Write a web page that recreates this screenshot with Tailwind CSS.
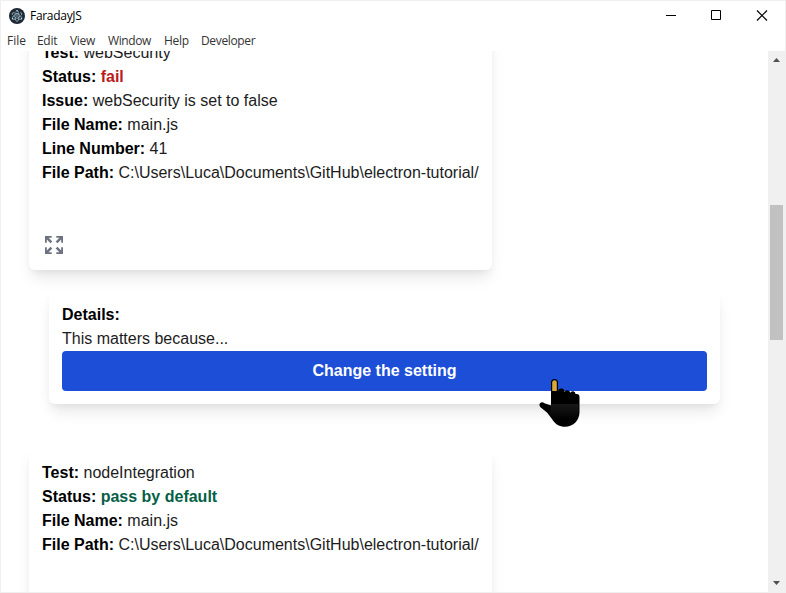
<!DOCTYPE html>
<html lang="en">
<head>
<meta charset="utf-8">
<title>FaradayJS</title>
<script src="https://cdn.jsdelivr.net/npm/@tailwindcss/browser@4"></script>
</head>
<body class="h-[593px] w-[786px] overflow-hidden bg-white">
<div class="relative flex h-[593px] w-[786px] flex-col overflow-hidden border border-[#efefef] bg-white font-['Liberation_Sans',Arial,sans-serif] text-[#1c1c1c]">
  <header class="shrink-0 font-['Open_Sans','Noto_Sans',sans-serif] text-[12px]">
    <div class="flex h-[29px] items-center pl-[8px]">
      <svg class="h-4 w-4" viewBox="0 0 16 16"><circle cx="8" cy="8" r="8" fill="#1f2833"/><g fill="none" stroke="#9fc3d2" stroke-width=".8" stroke-dasharray="4 1.200"><ellipse cx="8" cy="8" rx="5.4" ry="2.1" transform="rotate(30 8 8)"/><ellipse cx="8" cy="8" rx="5.4" ry="2.1" transform="rotate(90 8 8)"/><ellipse cx="8" cy="8" rx="5.4" ry="2.1" transform="rotate(150 8 8)"/></g><g fill="#c4dbe4"><circle cx="8" cy="8" r=".7"/><circle cx="8" cy="2.800" r=".7"/><circle cx="3.500" cy="10.800" r=".7"/><circle cx="12.500" cy="10.800" r=".7"/></g></svg>
      <span class="ml-[5px] tracking-[-0.3px] text-black">FaradayJS</span>
      <svg class="ml-auto mr-[17px] h-[11px] w-[102px]" viewBox="0 0 102 11" fill="none" stroke="#000"><path d="M0 5.5h10M45.500.5h9v9h-9z"/><path d="M91 .5l10 10M101 .5l-10 10" stroke-width="1.200"/></svg>
    </div>
    <nav class="flex h-[21px] items-center gap-[12px] pl-[6px] text-[#333]">
      <span class="w-[18px] whitespace-nowrap">File</span><span class="w-[21px] whitespace-nowrap tracking-[-0.3px]">Edit</span><span class="w-[26px] whitespace-nowrap tracking-[-0.3px]">View</span><span class="w-[44px] whitespace-nowrap tracking-[-0.4px]">Window</span><span class="w-[25px] whitespace-nowrap tracking-[-0.3px]">Help</span><span class="whitespace-nowrap tracking-[-0.35px]">Developer</span>
    </nav>
  </header>
  <div class="flex min-h-0 flex-1">
    <main class="flex min-w-0 flex-1 flex-col items-start overflow-hidden pl-[28px] text-[16px] leading-6">
      <section class="-mt-[23px] h-[242px] w-[463px] shrink-0 rounded-md bg-white px-[13px] pt-[13px] shadow-[0_10px_15px_-3px_rgba(0,0,0,0.1),0_4px_6px_-2px_rgba(0,0,0,0.05)]">
        <p><b class="text-black">Test:</b> webSecurity</p>
        <p><b class="text-black">Status: <span class="text-[#b91c1c]">fail</span></b></p>
        <p><b class="text-black">Issue:</b> webSecurity is set to false</p>
        <p><b class="text-black">File Name:</b> main.js</p>
        <p><b class="text-black">Line Number:</b> 41</p>
        <p class="whitespace-nowrap"><b class="text-black">File Path:</b> C:\Users\Luca\Documents\GitHub\electron-tutorial/</p>
        <svg class="ml-[3px] mt-[51px] h-[18px] w-[18px]" viewBox="0 0 18 18" fill="#6b7280"><path id="arrow" d="M0 0h6.700v1.800H3.600L7.300 5.500 5.500 7.300 1.800 3.600v3.100H0z"/><use href="#arrow" transform="matrix(-1 0 0 1 18 0)"/><use href="#arrow" transform="matrix(1 0 0 -1 0 18)"/><use href="#arrow" transform="matrix(-1 0 0 -1 18 18)"/></svg>
      </section>
      <section class="ml-[20px] mt-[20px] h-[114px] w-[671px] shrink-0 rounded-md bg-white px-[13px] pt-[13px] shadow-[0_10px_15px_-3px_rgba(0,0,0,0.1),0_4px_6px_-2px_rgba(0,0,0,0.05)]">
        <p><b class="text-black">Details:</b></p>
        <p>This matters because...</p>
        <button class="block h-10 w-[645px] rounded bg-[#1d4ed8] font-bold text-white">Change the setting</button>
      </section>
      <section class="mt-[44px] h-[242px] w-[463px] shrink-0 rounded-md bg-white px-[13px] pt-[13px] shadow-[0_10px_15px_-3px_rgba(0,0,0,0.1),0_4px_6px_-2px_rgba(0,0,0,0.05)]">
        <p><b class="text-black">Test:</b> nodeIntegration</p>
        <p><b class="text-black">Status: <span class="text-[#065f46]">pass by default</span></b></p>
        <p><b class="text-black">File Name:</b> main.js</p>
        <p class="whitespace-nowrap"><b class="text-black">File Path:</b> C:\Users\Luca\Documents\GitHub\electron-tutorial/</p>
      </section>
    </main>
    <aside class="flex w-[17px] shrink-0 flex-col items-center bg-[#f0f0f0]">
      <svg class="mt-[7px] h-1 w-[7px]" viewBox="0 0 7 4"><path d="M3.500 0L7 4H0z" fill="#505050"/></svg>
      <div class="mt-[143px] h-[135px] w-[13px] bg-[#c1c1c1]"></div>
      <svg class="mb-[7px] mt-auto h-1 w-[7px]" viewBox="0 0 7 4"><path d="M0 0h7L3.500 4z" fill="#505050"/></svg>
    </aside>
  </div>
  <svg class="absolute left-[537px] top-[377px] h-[52px] w-[46px]" viewBox="538 378 46 52"><defs><linearGradient id="palm" x1="0" y1="404" x2="0" y2="420" gradientUnits="userSpaceOnUse"><stop offset="0" stop-color="#181818"/><stop offset="1" stop-color="#000"/></linearGradient></defs>
    <path d="M551 405.500V382.500a3.500 3.500 0 0 1 7 0V391.500a3.200 3.200 0 0 1 6.500 .5a3 3 0 0 1 5.700 .8a2.800 2.800 0 0 1 5.300 1.200q4-.5 4 3V412c0 8-6 14.800-14.500 14.800-5.500 0-9.500-2.300-13-7.800l-5-6.500-6.500-5.300q-2-2.500-.3-4.200 2-1.800 4.300.2z" fill="#000"/>
    <path d="M551 404h27.500v8c0 7.500-5.500 13.500-13.500 13.500-5.500 0-9-2-12.500-7.300l-3-4z" fill="url(#palm)"/>
    <path d="M552.200 391v-8.500q0-2.200 2.300-2.200t2.300 2.200V391z" fill="#d9a93c"/></svg>
</div>
</body>
</html>
